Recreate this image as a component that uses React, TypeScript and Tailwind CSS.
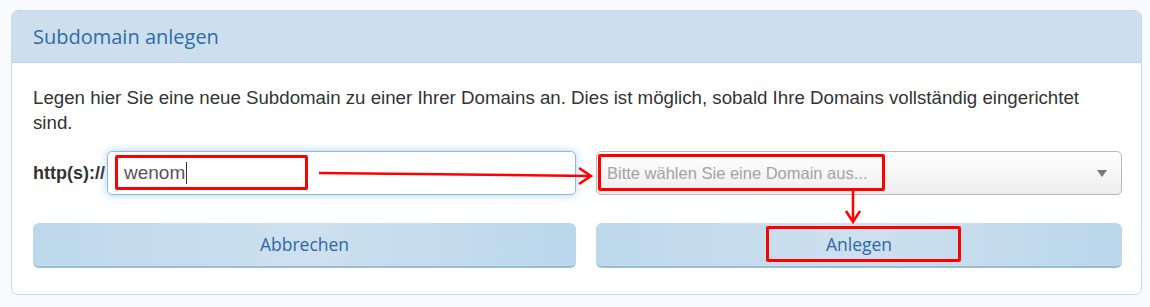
import React from "react";

export default function App() {
  return (
    <div className="relative w-[1150px] h-[307px] bg-[#f8fafd] pt-[10px] pl-[11px]" style={{ fontFamily: '"Liberation Sans", Arial, sans-serif' }}>
      <div className="w-[1131px] h-[285px] rounded-[7px] border border-[#c3d9eb] bg-white overflow-hidden">
        <div className="h-[52px] bg-[#cddfec] border-b border-[#bcd4e7] pl-[21px] flex items-center">
          <span className="text-[20px] text-[#2d6ca9]" style={{ fontFamily: '"Open Sans", sans-serif' }}>Subdomain anlegen</span>
        </div>
        <div className="pl-[21px] pr-[19px] pt-[22px]">
          <p className="text-[18.7px] leading-[25px] text-[#333]">
            Legen hier Sie eine neue Subdomain zu einer Ihrer Domains an. Dies ist möglich, sobald Ihre Domains vollständig eingerichtet sind.
          </p>
          <div className="mt-[16px] grid grid-cols-[543px_1fr] gap-x-[20px]">
            <div className="flex items-center">
              <span className="w-[74px] text-[18px] font-bold text-[#333]">http(s)://</span>
              <div className="flex-1 h-[44px] rounded-[5px] border border-[#8dbbe6] bg-white shadow-[0_0_8px_rgba(102,175,233,0.55)] flex items-center pl-[16px]">
                <span className="text-[19px] text-[#555]">wenom</span>
                <span className="w-[1px] h-[22px] bg-[#333] ml-[1px]" />
              </div>
            </div>
            <div className="h-[44px] rounded-[5px] border border-[#b9b9b9] bg-gradient-to-b from-white to-[#eeeeee] flex items-center pl-[10px] pr-[14px] justify-between">
              <span className="text-[16.5px] text-[#a3a3a3]">Bitte wählen Sie eine Domain aus...</span>
              <span className="w-0 h-0 border-l-[5px] border-r-[5px] border-t-[7px] border-l-transparent border-r-transparent border-t-[#777]" />
            </div>
            <button className="mt-[28px] h-[45px] rounded-[6px] bg-gradient-to-r from-[#bdd8ec] via-[#cde0ee] to-[#bad7ec] border-b-2 border-[#9dbcd4] text-[17.5px] text-[#2e67a6]" style={{ fontFamily: '"Open Sans", sans-serif' }}>
              Abbrechen
            </button>
            <button className="mt-[28px] h-[45px] rounded-[6px] bg-gradient-to-r from-[#bdd8ec] via-[#cde0ee] to-[#bad7ec] border-b-2 border-[#9dbcd4] text-[17.5px] text-[#2e67a6]" style={{ fontFamily: '"Open Sans", sans-serif' }}>
              Anlegen
            </button>
          </div>
        </div>
      </div>

      {/* red annotation boxes */}
      <div className="absolute left-[115px] top-[155px] w-[193px] h-[35px] border-[3px] border-[#ff0000] rounded-[2px]" />
      <div className="absolute left-[598px] top-[154px] w-[287px] h-[37px] border-[3px] border-[#ff0000] rounded-[2px]" />
      <div className="absolute left-[766px] top-[226px] w-[195px] h-[36px] border-[3px] border-[#ff0000] rounded-[2px]" />

      {/* arrows */}
      <svg className="absolute left-0 top-0 pointer-events-none" width="1150" height="307">
        <line x1="319" y1="173" x2="590" y2="176" stroke="#ff0000" strokeWidth="2.5" />
        <polyline points="579,168 591,176 579,184" fill="none" stroke="#ff0000" strokeWidth="2.5" />
        <line x1="853" y1="191" x2="853" y2="221" stroke="#ff0000" strokeWidth="2.5" />
        <polyline points="846,211 853,222 860,211" fill="none" stroke="#ff0000" strokeWidth="2.5" />
      </svg>
    </div>
  );
}
